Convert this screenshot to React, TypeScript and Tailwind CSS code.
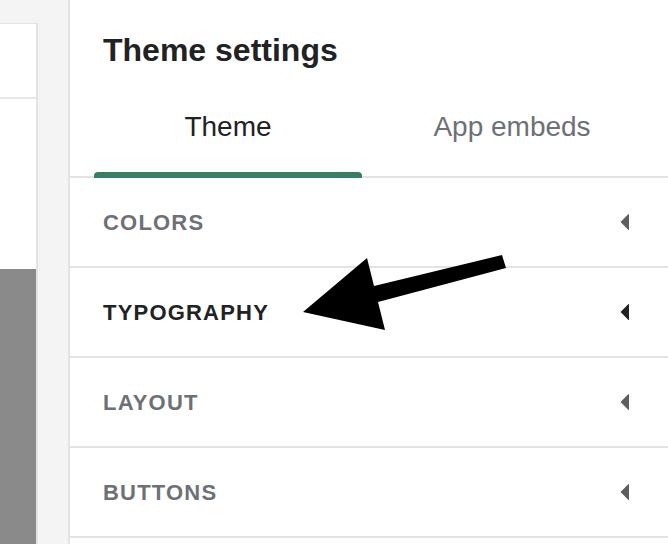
import React from "react"

const font = { fontFamily: '"Liberation Sans", Arial, sans-serif' }

type Section = { label: string; active?: boolean }

const sections: Section[] = [
  { label: "COLORS" },
  { label: "TYPOGRAPHY", active: true },
  { label: "LAYOUT" },
  { label: "BUTTONS" },
]

function Caret({ dark }: { dark?: boolean }) {
  return (
    <svg width="10" height="18" viewBox="0 0 10 18" className={dark ? "text-[#202223]" : "text-[#5c5f62]"}>
      <path d="M9 1.5 L9 16.5 Q9 17.5 8.2 16.8 L1 9.6 Q0.4 9 1 8.4 L8.2 1.2 Q9 0.5 9 1.5 Z" fill="currentColor" />
    </svg>
  )
}

function SectionRow({ label, active }: Section) {
  return (
    <div className="flex h-[90px] items-center justify-between border-b-2 border-[#e3e3e3] pl-[33px] pr-[38px]">
      <span className={`text-[22px] font-bold tracking-[1.2px] ${active ? "text-[#202223]" : "text-[#6d7175]"}`}>{label}</span>
      <Caret dark={active} />
    </div>
  )
}

function Tab({ label, selected }: { label: string; selected?: boolean }) {
  return (
    <div className="flex flex-1 flex-col items-stretch">
      <span className={`pt-[47px] text-center text-[28px] leading-[28px] ${selected ? "text-[#202223]" : "text-[#6d7175]"}`}>
        {label}
      </span>
      <div className={`relative mx-[8px] mt-[31px] -mb-[2px] h-[6px] rounded-t-[4px] ${selected ? "bg-[#368061]" : "bg-transparent"}`} />
    </div>
  )
}

export default function App() {
  return (
    <div className="relative flex h-[544px] w-[668px] overflow-hidden bg-[#f4f4f4]" style={font}>
      {/* preview column, mostly cut off */}
      <div className="flex w-[38px] shrink-0 flex-col pt-[23px]">
        <div className="flex flex-1 flex-col border-r-2 border-t border-[#e3e3e3] bg-white">
          <div className="h-[75px] border-b-2 border-[#e8e8e8]" />
          <div className="h-[170px]" />
          <div className="flex-1 bg-[#8a8a8a]" />
        </div>
      </div>

      {/* settings panel */}
      <div className="ml-[30px] flex min-w-0 flex-1 flex-col border-l-2 border-[#e3e3e3] bg-white">
        <h1 className="pl-[33px] pt-[34px] text-[32px] font-bold leading-[32px] text-[#202223]">Theme settings</h1>
        <div className="flex border-b-2 border-[#e3e3e3] pl-[16px] pr-[14px]">
          <Tab label="Theme" selected />
          <Tab label="App embeds" />
        </div>
        {sections.map((s) => (
          <SectionRow key={s.label} {...s} />
        ))}
      </div>

      {/* annotation arrow */}
      <svg className="pointer-events-none absolute left-0 top-0" width="668" height="544" viewBox="0 0 668 544">
        <polygon points="303,312 385,330 378,302 506,268 502,255 374,286 367,258" fill="#000" />
      </svg>
    </div>
  )
}
